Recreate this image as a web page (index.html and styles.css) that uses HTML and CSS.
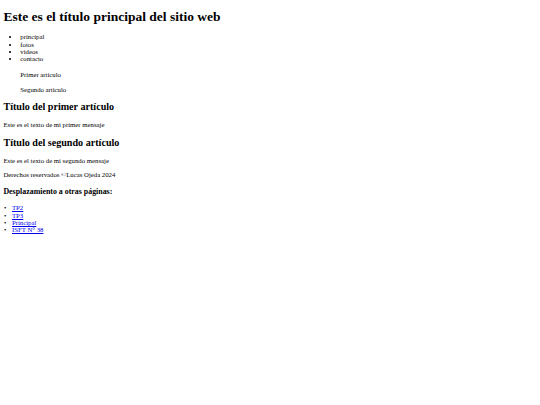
FILE: index.html
```html
<!DOCTYPE html>
<html lang="es">
<head>
<meta charset="utf-8">
<title>Sitio web</title>
<link rel="stylesheet" href="styles.css">
</head>
<body>
<header class="cabecera">
  <h1 class="titulo">Este es el título principal del sitio web</h1>
  <nav class="menu">
    <ul class="menu-lista">
      <li>principal</li>
      <li>fotos</li>
      <li>videos</li>
      <li>contacto</li>
    </ul>
  </nav>
</header>
<aside class="indice">
  <p class="indice-item">Primer artículo</p>
  <p class="indice-item">Segundo artículo</p>
</aside>
<main class="contenido">
  <article class="articulo">
    <h2 class="subtitulo">Título del primer artículo</h2>
    <p class="texto">Este es el texto de mi primer mensaje</p>
  </article>
  <article class="articulo">
    <h2 class="subtitulo">Título del segundo artículo</h2>
    <p class="texto">Este es el texto de mi segundo mensaje</p>
  </article>
</main>
<footer class="pie">
  <p class="texto texto-pie">Derechos reservados ©Lucas Ojeda 2024</p>
  <h3 class="pie-titulo">Desplazamiento a otras páginas:</h3>
  <ul class="enlaces">
    <li><a href="#">TP2</a></li>
    <li><a href="#">TP3</a></li>
    <li><a href="#">Principal</a></li>
    <li><a href="#">ISFT N° 38</a></li>
  </ul>
</footer>
</body>
</html>
```
FILE: styles.css
```css
html {
  background: #ffffff;
}
body {
  margin: 3.4px;
  font-family: "Liberation Serif", "Times New Roman", serif;
  font-size: 6.75px;
  color: #000000;
}
.titulo {
  font-size: 13.5px;
  margin: 5.9px 0 8px;
  font-weight: bold;
}
.menu-lista {
  margin: 6.75px 0 8.75px;
  padding-left: 16.9px;
}
.menu-lista li {
  line-height: 7.25px;
}
.indice {
  margin: 0 0 0 16.9px;
}
.indice-item {
  margin: 7.5px 0;
}
.texto {
  margin: 6.75px 0;
}
.texto-pie {
  margin-top: 7.4px;
}
.subtitulo {
  font-size: 10.125px;
  margin: 8.9px 0;
  font-weight: bold;
}
.pie-titulo {
  font-size: 7.9px;
  margin: 8.3px 0 8.6px;
  font-weight: bold;
}
.enlaces {
  margin: 6.75px 0;
  padding-left: 8.6px;
  list-style: none;
}
.enlaces li {
  line-height: 7.33px;
}
.enlaces li::before {
  content: "•";
  display: inline-block;
  width: 8px;
  margin-left: -8px;
}
.enlaces a {
  color: #0000ee;
}
```
